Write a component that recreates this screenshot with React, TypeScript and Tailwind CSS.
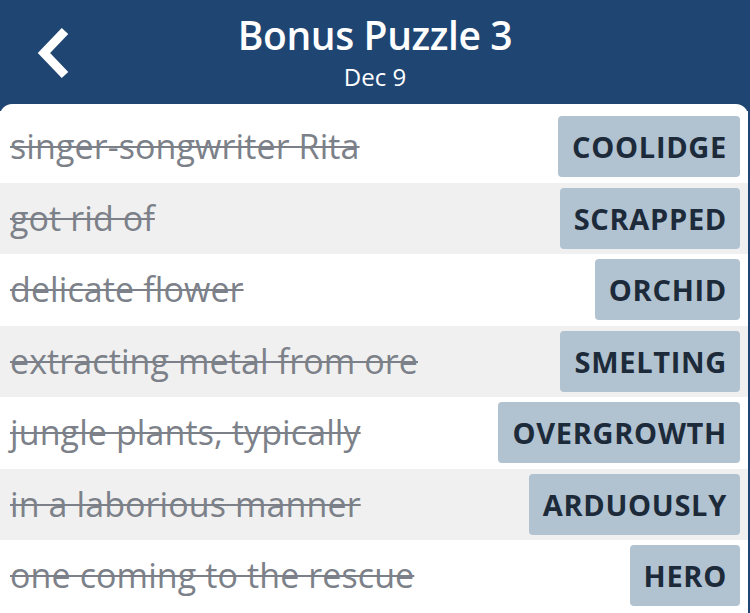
import React from "react";

const rows = [
  { clue: "singer-songwriter Rita", answer: "COOLIDGE" },
  { clue: "got rid of", answer: "SCRAPPED" },
  { clue: "delicate flower", answer: "ORCHID" },
  { clue: "extracting metal from ore", answer: "SMELTING" },
  { clue: "jungle plants, typically", answer: "OVERGROWTH" },
  { clue: "in a laborious manner", answer: "ARDUOUSLY" },
  { clue: "one coming to the rescue", answer: "HERO" },
];

export default function App() {
  return (
    <div className="w-[750px] h-[613px] overflow-hidden bg-[#1f4673] flex flex-col" style={{ fontFamily: "'Open Sans', Lato, sans-serif" }}>
      <div className="relative h-[104px] shrink-0 flex flex-col items-center text-white">
        <svg className="absolute left-[36px] top-[27px]" width="34" height="52" viewBox="0 0 34 52">
          <path d="M29 4 L8 26 L29 48" fill="none" stroke="white" strokeWidth="9" strokeLinecap="butt" strokeLinejoin="miter" />
        </svg>
        <div className="mt-[9px] text-[39px] leading-[52px] font-semibold tracking-[-0.4px]">Bonus Puzzle 3</div>
        <div className="text-[24px] leading-[30px] mt-[1px]">Dec 9</div>
      </div>
      <div className="flex-1 bg-white rounded-t-[12px] pt-[7px] mr-[2px]">
        {rows.map((r, i) => (
          <div key={i} className={`h-[71.5px] flex items-center justify-between pl-[10px] pr-[8px] ${i % 2 === 1 ? "bg-[#f0f0f0]" : "bg-white"}`}>
            <span className="text-[34px] text-[#7c8189] line-through decoration-[2px] decoration-[#7c8189] tracking-[0.1px]">{r.clue}</span>
            <span className="h-[61px] flex items-center pl-[14px] pr-[13px] rounded-[4px] bg-[#b1c2d0] text-[#1c2a3a] text-[29px] font-bold tracking-[0.7px]">{r.answer}</span>
          </div>
        ))}
      </div>
    </div>
  );
}
